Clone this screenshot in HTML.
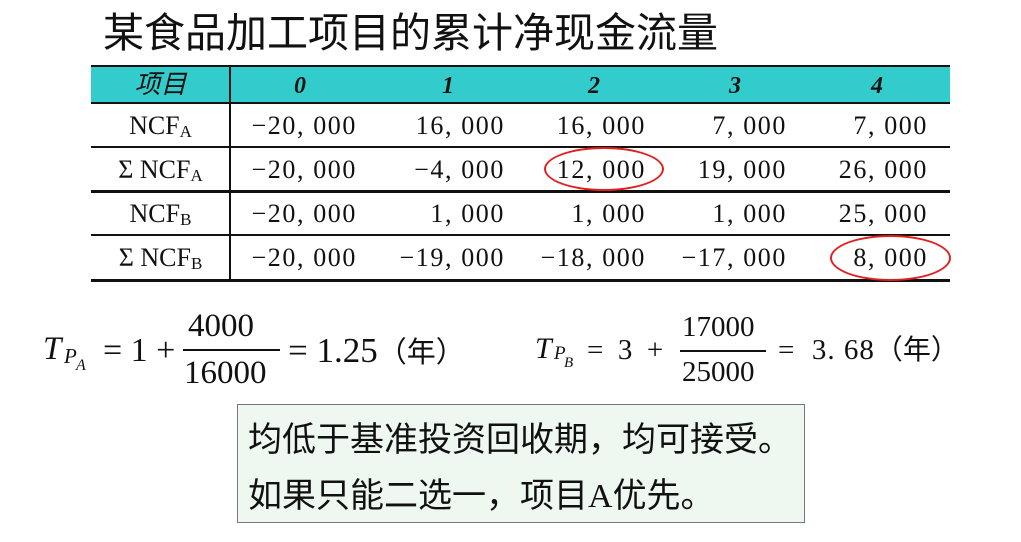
<!DOCTYPE html>
<html><head><meta charset="utf-8"><style>
body{margin:0;width:1021px;height:542px;background:#fff;position:relative;overflow:hidden;font-family:"Liberation Serif","Noto Serif CJK SC",serif;color:#111}
.a{position:absolute;white-space:nowrap;line-height:1}
.cjk{font-family:"Liberation Sans","Noto Sans CJK SC",sans-serif}
.h{position:absolute;left:91px;width:859px;background:#111}
.n{position:absolute;font-size:26px;letter-spacing:1.6px;line-height:1;text-align:right;white-space:nowrap;font-family:"Liberation Serif",serif}
.c{position:absolute;font-size:26px;line-height:1;text-align:center;white-space:nowrap}
.hd{position:absolute;font-size:24px;font-weight:bold;font-style:italic;text-align:center;top:74px;line-height:1}
sub{font-size:17px;vertical-align:-3px}
.ell{position:absolute;border:2px solid #e02020;border-radius:50%}
</style></head><body>
<div class="a cjk" style="left:103px;top:13px;font-size:41px;">某食品加工项目的累计净现金流量</div>

<div style="position:absolute;left:91px;top:67px;width:859px;height:36px;background:#33cccc"></div>
<div class="h" style="top:65px;height:2px"></div>
<div class="h" style="top:102px;height:2px"></div>
<div class="h" style="top:146px;height:2px"></div>
<div class="h" style="top:190px;height:3px"></div>
<div class="h" style="top:234px;height:2px"></div>
<div class="h" style="top:279px;height:3px"></div>
<div style="position:absolute;left:229px;top:66px;width:2px;height:215px;background:#111"></div>

<div class="hd cjk" style="left:91px;width:139px;font-weight:normal;font-size:26px;top:71px">项目</div>
<div class="hd" style="left:270px;width:60px">0</div>
<div class="hd" style="left:418px;width:60px">1</div>
<div class="hd" style="left:564px;width:60px">2</div>
<div class="hd" style="left:705px;width:60px">3</div>
<div class="hd" style="left:847px;width:60px">4</div>

<div class="c" style="left:91px;width:139px;top:113px">NCF<sub>A</sub></div>
<div class="c" style="left:91px;width:139px;top:157px">Σ NCF<sub>A</sub></div>
<div class="c" style="left:91px;width:139px;top:201px">NCF<sub>B</sub></div>
<div class="c" style="left:91px;width:139px;top:245px">Σ NCF<sub>B</sub></div>

<div class="n" style="left:230px;width:127px;top:113px">−20, 000</div>
<div class="n" style="left:360px;width:145px;top:113px">16, 000</div>
<div class="n" style="left:505px;width:141px;top:113px">16, 000</div>
<div class="n" style="left:646px;width:141px;top:113px">7, 000</div>
<div class="n" style="left:787px;width:141px;top:113px">7, 000</div>

<div class="n" style="left:230px;width:127px;top:157px">−20, 000</div>
<div class="n" style="left:360px;width:145px;top:157px">−4, 000</div>
<div class="n" style="left:505px;width:141px;top:157px">12, 000</div>
<div class="n" style="left:646px;width:141px;top:157px">19, 000</div>
<div class="n" style="left:787px;width:141px;top:157px">26, 000</div>

<div class="n" style="left:230px;width:127px;top:201px">−20, 000</div>
<div class="n" style="left:360px;width:145px;top:201px">1, 000</div>
<div class="n" style="left:505px;width:141px;top:201px">1, 000</div>
<div class="n" style="left:646px;width:141px;top:201px">1, 000</div>
<div class="n" style="left:787px;width:141px;top:201px">25, 000</div>

<div class="n" style="left:230px;width:127px;top:245px">−20, 000</div>
<div class="n" style="left:360px;width:145px;top:245px">−19, 000</div>
<div class="n" style="left:505px;width:141px;top:245px">−18, 000</div>
<div class="n" style="left:646px;width:141px;top:245px">−17, 000</div>
<div class="n" style="left:787px;width:141px;top:245px">8, 000</div>

<div class="ell" style="left:544px;top:147px;width:116px;height:40px"></div>
<div class="ell" style="left:830px;top:235px;width:117px;height:42px"></div>

<!-- formula A -->
<div class="a" style="left:43px;top:333px;font-size:33px;font-style:italic">T</div>
<div class="a" style="left:64px;top:346px;font-size:21px;font-style:italic">P</div>
<div class="a" style="left:76px;top:358px;font-size:16px;font-style:italic">A</div>
<div class="a" style="left:103px;top:334px;font-size:34px">= 1 +</div>
<div class="a" style="left:188px;top:310px;font-size:33px">4000</div>
<div style="position:absolute;left:183px;top:349px;width:97px;height:2px;background:#111"></div>
<div class="a" style="left:184px;top:357px;font-size:33px">16000</div>
<div class="a" style="left:288px;top:333px;font-size:35px">= 1.25<span class="cjk" style="font-size:29px">（年）</span></div>

<!-- formula B -->
<div class="a" style="left:535px;top:334px;font-size:30px;font-style:italic">T</div>
<div class="a" style="left:554px;top:344px;font-size:19px;font-style:italic">P</div>
<div class="a" style="left:564px;top:356px;font-size:15px;font-style:italic">B</div>
<div class="a" style="left:587px;top:336px;font-size:29px">=&nbsp; 3 &nbsp;+</div>
<div class="a" style="left:682px;top:313px;font-size:29px">17000</div>
<div style="position:absolute;left:680px;top:350px;width:86px;height:2px;background:#111"></div>
<div class="a" style="left:682px;top:358px;font-size:29px">25000</div>
<div class="a" style="left:778px;top:336px;font-size:29px;letter-spacing:1px">=&nbsp; 3. 68<span class="cjk" style="font-size:28px;letter-spacing:0">（年）</span></div>

<div style="position:absolute;left:237px;top:404px;width:566px;height:117px;background:#eef8f1;border:1px solid #777"></div>
<div class="a cjk" style="left:248px;top:423px;font-size:34px">均低于基准投资回收期，均可接受。</div>
<div class="a cjk" style="left:248px;top:479px;font-size:34px">如果只能二选一，项目<span style="font-family:'Liberation Serif',serif">A</span>优先。</div>
</body></html>
